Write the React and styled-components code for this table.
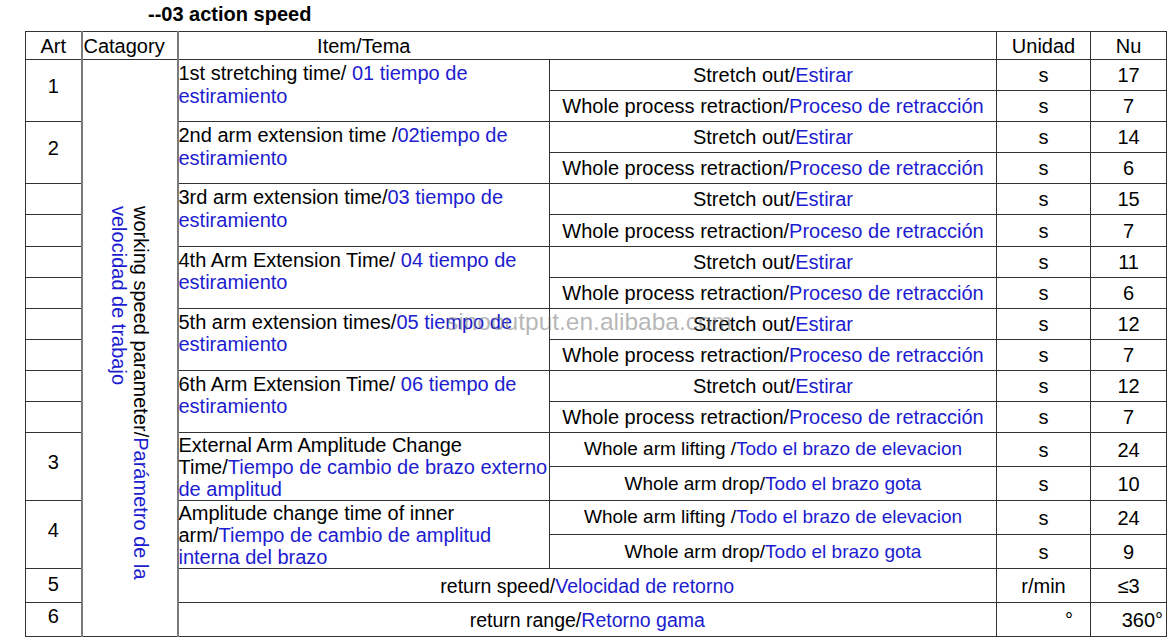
import React from "react";
import styled, { createGlobalStyle } from "styled-components";

const Global = createGlobalStyle`
  html, body { margin: 0; padding: 0; background: #fff; }
  body { font-family: "Liberation Sans", Arial, sans-serif; color: #000; }
`;

const Page = styled.div`
  position: relative;
  width: 1176px;
  height: 643px;
  overflow: hidden;
`;

const Title = styled.div`
  height: 31px;
  line-height: 28px;
  padding-left: 148px;
  font-size: 20px;
  font-weight: bold;
`;

const Table = styled.table`
  margin-left: 25px;
  width: 1141px;
  border-collapse: collapse;
  table-layout: fixed;
  font-size: 20px;
  line-height: 22px;
`;

const Row = styled.tr`
  height: ${(p) => p.$h}px;
`;

const Cell = styled.td`
  border: 1px solid #333;
  padding: ${(p) => p.$pad || "0"};
  text-align: ${(p) => p.$align || "center"};
  vertical-align: ${(p) => p.$valign || "middle"};
  white-space: nowrap;
  font-weight: normal;
  font-size: ${(p) => p.$size || 20}px;
  overflow: visible;
`;

const SplitCell = styled(Cell)`
  border-left: 2px solid #7a7a7a;
  border-right: 2px solid #7a7a7a;
`;

const ItemCell = styled(Cell)`
  text-align: left;
  vertical-align: top;
  padding: ${(p) => (p.$tight ? "1px 0 0 0" : "2px 0 0 0")};
  line-height: ${(p) => (p.$tight ? "22px" : "22.5px")};
`;

const Vertical = styled.div`
  display: inline-block;
  writing-mode: vertical-rl;
  white-space: nowrap;
  line-height: 22px;
  margin-top: 146px;
  text-align: left;
`;

const Blue = styled.span`
  color: #1c1cd0;
`;

const Watermark = styled.div`
  position: absolute;
  left: 446px;
  top: 308px;
  font-size: 24.5px;
  line-height: 28px;
  color: rgba(110, 110, 110, 0.5);
  pointer-events: none;
  white-space: nowrap;
`;

const armRows = [
  { art: "1", en: "1st stretching time/ ", es: "01 tiempo de", v: ["17", "7"] },
  { art: "2", en: "2nd arm extension time /", es: "02tiempo de", v: ["14", "6"] },
  { art: "", en: "3rd arm extension time/", es: "03 tiempo de", v: ["15", "7"] },
  { art: "", en: "4th Arm Extension Time/ ", es: "04 tiempo de", v: ["11", "6"] },
  { art: "", en: "5th arm extension times/", es: "05 tiempo de", v: ["12", "7"] },
  { art: "", en: "6th Arm Extension Time/ ", es: "06 tiempo de", v: ["12", "7"] },
];

const ampRows = [
  {
    art: "3",
    item: (
      <>
        External Arm Amplitude Change
        <br />
        Time/<Blue>Tiempo de cambio de brazo externo</Blue>
        <br />
        <Blue>de amplitud</Blue>
      </>
    ),
    v: ["24", "10"],
  },
  {
    art: "4",
    item: (
      <>
        Amplitude change time of inner
        <br />
        arm/<Blue>Tiempo de cambio de amplitud</Blue>
        <br />
        <Blue>interna del brazo</Blue>
      </>
    ),
    v: ["24", "9"],
  },
];

const SUB_H = 31.1;

export default function App() {
  const rows = [];

  armRows.forEach((r, i) => {
    rows.push(
      <Row $h={SUB_H} key={`a${i}`}>
        {r.art ? (
          <Cell rowSpan={2} $pad="0 0 10px 0">
            {r.art}
          </Cell>
        ) : (
          <Cell />
        )}
        {i === 0 && (
          <SplitCell rowSpan={18} $valign="top">
            <Vertical>
              working speed parameter/<Blue>Parámetro de la</Blue>
              <br />
              <Blue>velocidad de trabajo</Blue>
            </Vertical>
          </SplitCell>
        )}
        <ItemCell rowSpan={2}>
          {r.en}
          <Blue>{r.es}</Blue>
          <br />
          <Blue>estiramiento</Blue>
        </ItemCell>
        <Cell>
          Stretch out/<Blue>Estirar</Blue>
        </Cell>
        <Cell>s</Cell>
        <Cell>{r.v[0]}</Cell>
      </Row>
    );
    rows.push(
      <Row $h={SUB_H} key={`b${i}`}>
        {!r.art && <Cell />}
        <Cell>
          Whole process retraction/<Blue>Proceso de retracción</Blue>
        </Cell>
        <Cell>s</Cell>
        <Cell>{r.v[1]}</Cell>
      </Row>
    );
  });

  ampRows.forEach((r, i) => {
    rows.push(
      <Row $h={34} key={`c${i}`}>
        <Cell rowSpan={2} $pad="0 0 10px 0">
          {r.art}
        </Cell>
        <ItemCell rowSpan={2} $tight>
          {r.item}
        </ItemCell>
        <Cell $size={19} $pad="0 0 2px 0">
          Whole arm lifting /<Blue>Todo el brazo de elevacion</Blue>
        </Cell>
        <Cell>s</Cell>
        <Cell>{r.v[0]}</Cell>
      </Row>
    );
    rows.push(
      <Row $h={34} key={`d${i}`}>
        <Cell $size={19}>
          Whole arm drop/<Blue>Todo el brazo gota</Blue>
        </Cell>
        <Cell>s</Cell>
        <Cell>{r.v[1]}</Cell>
      </Row>
    );
  });

  rows.push(
    <Row $h={34} key="e5">
      <Cell $pad="0 0 3px 0">5</Cell>
      <Cell colSpan={2} $size={19.5}>
        return speed/<Blue>Velocidad de retorno</Blue>
      </Cell>
      <Cell>r/min</Cell>
      <Cell>≤3</Cell>
    </Row>
  );
  rows.push(
    <Row $h={34} key="e6">
      <Cell $pad="0 0 8px 0">6</Cell>
      <Cell colSpan={2} $size={19.5}>
        return range/<Blue>Retorno gama</Blue>
      </Cell>
      <Cell $align="right" $pad="0 17px 0 0">
        °
      </Cell>
      <Cell $align="right" $pad="0 3px 0 0">
        360°
      </Cell>
    </Row>
  );

  return (
    <Page>
      <Global />
      <Title>--03 action speed</Title>
      <Table>
        <colgroup>
          <col style={{ width: 56 }} />
          <col style={{ width: 96 }} />
          <col style={{ width: 372 }} />
          <col style={{ width: 447 }} />
          <col style={{ width: 94 }} />
          <col style={{ width: 76 }} />
        </colgroup>
        <tbody>
          <Row $h={28}>
            <Cell as="th">Art</Cell>
            <SplitCell as="th" $align="left" $pad="0 0 0 1px">
              Catagory
            </SplitCell>
            <Cell as="th" colSpan={2} $pad="0 447px 0 0">
              Item/Tema
            </Cell>
            <Cell as="th">Unidad</Cell>
            <Cell as="th">Nu</Cell>
          </Row>
          {rows}
        </tbody>
      </Table>
      <Watermark>sinooutput.en.alibaba.com</Watermark>
    </Page>
  );
}
